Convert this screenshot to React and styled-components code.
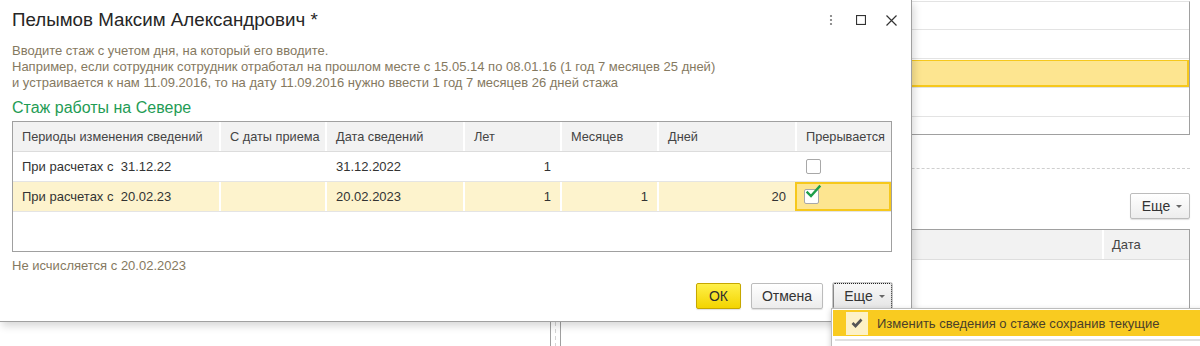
import React from "react";
import styled, { createGlobalStyle } from "styled-components";

const Global = createGlobalStyle`
  html, body { margin: 0; padding: 0; background: #fff; }
  body { font-family: "Liberation Sans", Arial, sans-serif; color: #333; }
  * { box-sizing: border-box; }
`;

const Page = styled.div`
  position: relative;
  width: 1200px;
  height: 346px;
  overflow: hidden;
  display: flex;
  background: #fff;
`;

const Spacer = styled.div`
  width: 550px;
  flex: none;
`;

const Splitter = styled.div`
  width: 11px;
  flex: none;
  border-left: 1px solid #a0a0a0;
  border-right: 1px solid #a0a0a0;
  background: repeating-linear-gradient(to bottom, #d4d4d4 0 4px, transparent 4px 7px) no-repeat center / 1px 100%;
`;

const RightPane = styled.div`
  flex: 1;
  padding-right: 10px;
  display: flex;
  flex-direction: column;
`;

const BgTable = styled.div`
  height: 134px;
  border-right: 1px solid #a0a0a0;
  border-bottom: 1px solid #a0a0a0;
  border-top: 1px solid #e3e3e3;
  margin-top: 1px;
`;

const BgRow = styled.div`
  height: 29px;
  border-bottom: 1px solid #e3e3e3;
  &:first-child { height: 28px; }
  ${(p) => p.$selected && `
    background: #fde590;
    box-shadow: inset 0 1px 0 #fff, inset 0 0 0 2px #f6c81c;
  `}
`;

const DashedRule = styled.div`
  margin-top: 33px;
  border-top: 1px dashed #cfcfcf;
`;

const BgToolbar = styled.div`
  margin-top: 24px;
  display: flex;
  justify-content: flex-end;
`;

const MoreButton = styled.div`
  height: 26px;
  width: ${(p) => p.$w}px;
  padding-left: 4px;
  display: flex;
  align-items: center;
  justify-content: center;
  gap: 6px;
  font-size: 14px;
  color: #333;
  border: 1px solid #bcbcbc;
  border-radius: 2px;
  background: linear-gradient(#ffffff, #ededed);
  box-shadow: 0 1px 1px rgba(0,0,0,0.12);
  ${(p) => p.$focused && `
    border: 1px dotted #222;
    background: linear-gradient(#f7f7f7, #e6e6e6);
    box-shadow: 0 0 0 1px #c8c8c8;
  `}
`;

const Caret = styled.span`
  width: 0;
  height: 0;
  border-left: 3px solid transparent;
  border-right: 3px solid transparent;
  border-top: 3px solid #666;
  margin-top: 1px;
`;

const BgTable2 = styled.div`
  margin-top: 10px;
  flex: 1;
  border-right: 1px solid #a0a0a0;
  border-top: 1px solid #a0a0a0;
`;

const BgHeader = styled.div`
  height: 30px;
  background: #f2f2f2;
  border-bottom: 1px solid #dedede;
  display: grid;
  grid-template-columns: 1fr 87px;
`;

const BgHeadCell = styled.div`
  display: flex;
  align-items: center;
  padding-left: 8px;
  font-size: 13px;
  color: #444;
  & + & { border-left: 2px solid #fff; }
`;

/* ---------- Dialog ---------- */

const Dialog = styled.div`
  position: absolute;
  left: 0;
  top: 0;
  width: 912px;
  height: 322px;
  background: #fff;
  border-right: 1px solid #a0a0a0;
  border-bottom: 1px solid #a0a0a0;
  box-shadow: 2px 4px 8px rgba(0,0,0,0.16);
  padding: 9px 19px 0 12px;
  display: flex;
  flex-direction: column;
  z-index: 2;
`;

const TitleBar = styled.div`
  display: flex;
  align-items: center;
  height: 22px;
`;

const Title = styled.div`
  flex: 1;
  font-size: 18.75px;
  line-height: 22px;
  color: #262626;
`;

const TitleIcons = styled.div`
  display: flex;
  align-items: center;
  margin-right: -14px;
`;

const IconBtn = styled.div`
  width: 30px;
  height: 22px;
  display: flex;
  align-items: center;
  justify-content: center;
`;

const Info = styled.div`
  margin-top: 12px;
  font-size: 13px;
  line-height: 16px;
  color: #85795f;
`;

const GroupTitle = styled.div`
  margin-top: 8px;
  font-size: 16px;
  line-height: 18px;
  color: #1f9c55;
`;

const Table = styled.div`
  margin-top: 4px;
  width: 880px;
  height: 131px;
  border: 1px solid #a0a0a0;
  display: flex;
  flex-direction: column;
`;

const cols = "206px 106px 138px 97px 97px 138px 96px";

const HeadRow = styled.div`
  display: grid;
  grid-template-columns: ${cols};
  height: 30px;
  background: #f2f2f2;
  border-bottom: 1px solid #dcdcdc;
`;

const HeadCell = styled.div`
  display: flex;
  align-items: center;
  padding-left: 9px;
  font-size: 12.75px;
  color: #444;
  white-space: nowrap;
  & + & { border-left: 2px solid #fff; }
`;

const Row = styled.div`
  display: grid;
  grid-template-columns: ${cols};
  height: 30px;
  border-bottom: 1px solid #e4e4e4;
  background: ${(p) => (p.$active ? "#fdf3cd" : "#fff")};
`;

const Cell = styled.div`
  display: flex;
  align-items: center;
  justify-content: ${(p) => (p.$right ? "flex-end" : "flex-start")};
  padding: 0 9px;
  font-size: 13px;
  color: #333;
  white-space: pre;
  ${(p) => p.$sep && "& + & { border-left: 2px solid #fff; }"}
  ${(p) => p.$current && `
    background: #fde590;
    border: 2px solid #f6c81c !important;
    padding-left: 7px;
  `}
`;

const Check = styled.span`
  position: relative;
  width: 15px;
  height: 15px;
  border: 1px solid #a8a8a8;
  border-radius: 2px;
  background: #fff;
  display: inline-block;
  svg { position: absolute; left: 1px; top: -5px; overflow: visible; }
`;

const Note = styled.div`
  margin-top: 6px;
  font-size: 13px;
  line-height: 16px;
  color: #85795f;
`;

const Footer = styled.div`
  margin-top: 9px;
  width: 880px;
  display: flex;
  justify-content: flex-end;
  gap: 10px;
`;

const Button = styled.div`
  height: 26px;
  display: flex;
  align-items: center;
  justify-content: center;
  width: ${(p) => p.$w}px;
  font-size: 14px;
  color: #333;
  border-radius: 2px;
  border: 1px solid #bcbcbc;
  background: linear-gradient(#ffffff, #ececec);
  box-shadow: 0 1px 1px rgba(0,0,0,0.12);
  ${(p) => p.$primary && `
    border-color: #c6a700;
    background: linear-gradient(#fff04a, #f3d400);
    color: #2e2e2e;
  `}
`;

/* ---------- Dropdown menu ---------- */

const Menu = styled.div`
  position: absolute;
  left: 831px;
  top: 308px;
  width: 380px;
  height: 60px;
  background: #fff;
  border: 1px solid #bdbdbd;
  box-shadow: 0 2px 6px rgba(0,0,0,0.2);
  padding: 1px 0 0 1px;
  z-index: 3;
`;

const MenuItem = styled.div`
  height: 29px;
  display: flex;
  align-items: center;
  gap: 9px;
  padding-left: 13px;
  font-size: 13px;
  color: #4a3f2a;
  background: ${(p) => (p.$hot ? "#f9cb20" : "transparent")};
  border-bottom: 3px solid #fff;
  box-shadow: 0 4px 0 -2px #e0e0e0;
`;

const MenuIcon = styled.span`
  width: 22px;
  height: 23px;
  background: #fdf1c6;
  display: flex;
  align-items: center;
  justify-content: center;
`;

const CheckSvg = () => (
  <svg width="15" height="13" viewBox="0 0 15 13">
    <path d="M1.5 7.5 L5 11 L13.5 1.5" fill="none" stroke="#1d9e4a" strokeWidth="2.4" strokeLinecap="square" />
  </svg>
);

export default function App() {
  return (
    <>
      <Global />
      <Page>
        <Spacer />
        <Splitter />
        <RightPane>
          <BgTable>
            <BgRow />
            <BgRow />
            <BgRow $selected />
            <BgRow />
          </BgTable>
          <DashedRule />
          <BgToolbar>
            <MoreButton $w={60}>
              Еще <Caret />
            </MoreButton>
          </BgToolbar>
          <BgTable2>
            <BgHeader>
              <BgHeadCell />
              <BgHeadCell>Дата</BgHeadCell>
            </BgHeader>
          </BgTable2>
        </RightPane>

        <Dialog>
          <TitleBar>
            <Title>Пелымов Максим Александрович *</Title>
            <TitleIcons>
              <IconBtn>
                <svg width="4" height="12" viewBox="0 0 4 12">
                  <circle cx="2" cy="2" r="1.1" fill="#777" />
                  <circle cx="2" cy="6" r="1.1" fill="#777" />
                  <circle cx="2" cy="10" r="1.1" fill="#777" />
                </svg>
              </IconBtn>
              <IconBtn>
                <svg width="10" height="10" viewBox="0 0 10 10">
                  <rect x="0.5" y="0.5" width="9" height="9" fill="none" stroke="#333" strokeWidth="1.2" />
                </svg>
              </IconBtn>
              <IconBtn>
                <svg width="11" height="11" viewBox="0 0 11 11">
                  <path d="M0.5 0.5 L10.5 10.5 M10.5 0.5 L0.5 10.5" stroke="#333" strokeWidth="1.2" />
                </svg>
              </IconBtn>
            </TitleIcons>
          </TitleBar>

          <Info>
            Вводите стаж с учетом дня, на который его вводите.
            <br />
            Например, если сотрудник сотрудник отработал на прошлом месте с 15.05.14 по 08.01.16 (1 год 7 месяцев 25 дней)
            <br />
            и устраивается к нам 11.09.2016, то на дату 11.09.2016 нужно ввести 1 год 7 месяцев 26 дней стажа
          </Info>

          <GroupTitle>Стаж работы на Севере</GroupTitle>

          <Table>
            <HeadRow>
              <HeadCell>Периоды изменения сведений</HeadCell>
              <HeadCell>С даты приема</HeadCell>
              <HeadCell>Дата сведений</HeadCell>
              <HeadCell>Лет</HeadCell>
              <HeadCell>Месяцев</HeadCell>
              <HeadCell>Дней</HeadCell>
              <HeadCell>Прерывается</HeadCell>
            </HeadRow>
            <Row>
              <Cell>{"При расчетах с  31.12.22"}</Cell>
              <Cell />
              <Cell>31.12.2022</Cell>
              <Cell $right>1</Cell>
              <Cell $right />
              <Cell $right />
              <Cell>
                <Check />
              </Cell>
            </Row>
            <Row $active>
              <Cell $sep>{"При расчетах с  20.02.23"}</Cell>
              <Cell $sep />
              <Cell $sep>20.02.2023</Cell>
              <Cell $sep $right>1</Cell>
              <Cell $sep $right>1</Cell>
              <Cell $sep $right>20</Cell>
              <Cell $sep $current>
                <Check>
                  <CheckSvg />
                </Check>
              </Cell>
            </Row>
          </Table>

          <Note>Не исчисляется с 20.02.2023</Note>

          <Footer>
            <Button $primary $w={45}>ОК</Button>
            <Button $w={72}>Отмена</Button>
            <MoreButton $focused $w={59}>
              Еще <Caret />
            </MoreButton>
          </Footer>
        </Dialog>

        <Menu>
          <MenuItem $hot>
            <MenuIcon>
              <svg width="12" height="10" viewBox="0 0 12 10">
                <path d="M1.5 5 L4.5 8 L10.5 1.5" fill="none" stroke="#555" strokeWidth="2.6" />
              </svg>
            </MenuIcon>
            Изменить сведения о стаже сохранив текущие
          </MenuItem>
        </Menu>
      </Page>
    </>
  );
}
